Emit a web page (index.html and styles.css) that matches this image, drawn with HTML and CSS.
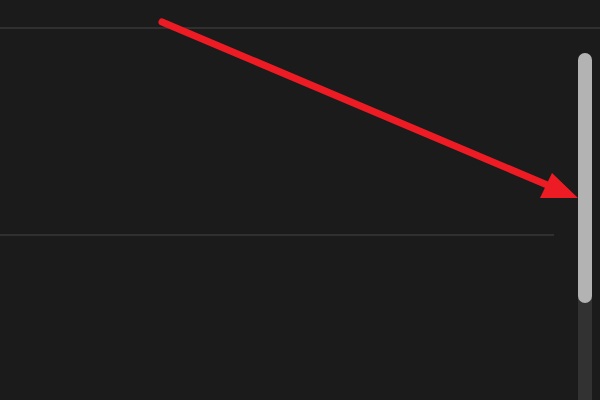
FILE: index.html
```html
<!DOCTYPE html>
<html lang="en">
<head>
    <meta charset="UTF-8">
    <meta name="viewport" content="width=device-width, initial-scale=1.0">
    <title>Scrollbar annotation</title>
    <link rel="stylesheet" href="styles.css">
</head>
<body>
    <div class="page">
        <header class="top-bar"></header>

        <div class="body-row">
            <main class="content">
                <section class="panel"></section>
            </main>

            <div class="scroll-track">
                <div class="scroll-thumb"></div>
            </div>
        </div>

        <!-- annotation arrow pointing at the scrollbar -->
        <svg class="annotation" width="600" height="400" viewBox="0 0 600 400">
            <line x1="162" y1="22" x2="552" y2="187" stroke="#ed1c24" stroke-width="7" stroke-linecap="round"/>
            <polygon points="540,198 552,173 578,198" fill="#ed1c24"/>
        </svg>
    </div>
</body>
</html>
```

FILE: styles.css
```css
html, body {
    margin: 0;
    padding: 0;
    height: 100%;
    overflow: hidden;
}

body {
    background: #1b1b1b;
    font-family: "Liberation Sans", Arial, sans-serif;
}

.page {
    position: relative;
    width: 600px;
    height: 400px;
    display: flex;
    flex-direction: column;
}

.top-bar {
    height: 27px;
    border-bottom: 2px solid #303030;
}

.body-row {
    flex: 1;
    display: flex;
    gap: 24px;
    padding-right: 8px;
}

.content {
    flex: 1;
}

.panel {
    height: 205px;
    border-bottom: 2px solid #303030;
}

.scroll-track {
    width: 14px;
    margin-top: 24px;
    background: #323232;
    border-radius: 7px 7px 0 0;
}

.scroll-thumb {
    height: 250px;
    background: #b3b3b3;
    border-radius: 7px;
}

.annotation {
    position: absolute;
    top: 0;
    left: 0;
    pointer-events: none;
}
```
